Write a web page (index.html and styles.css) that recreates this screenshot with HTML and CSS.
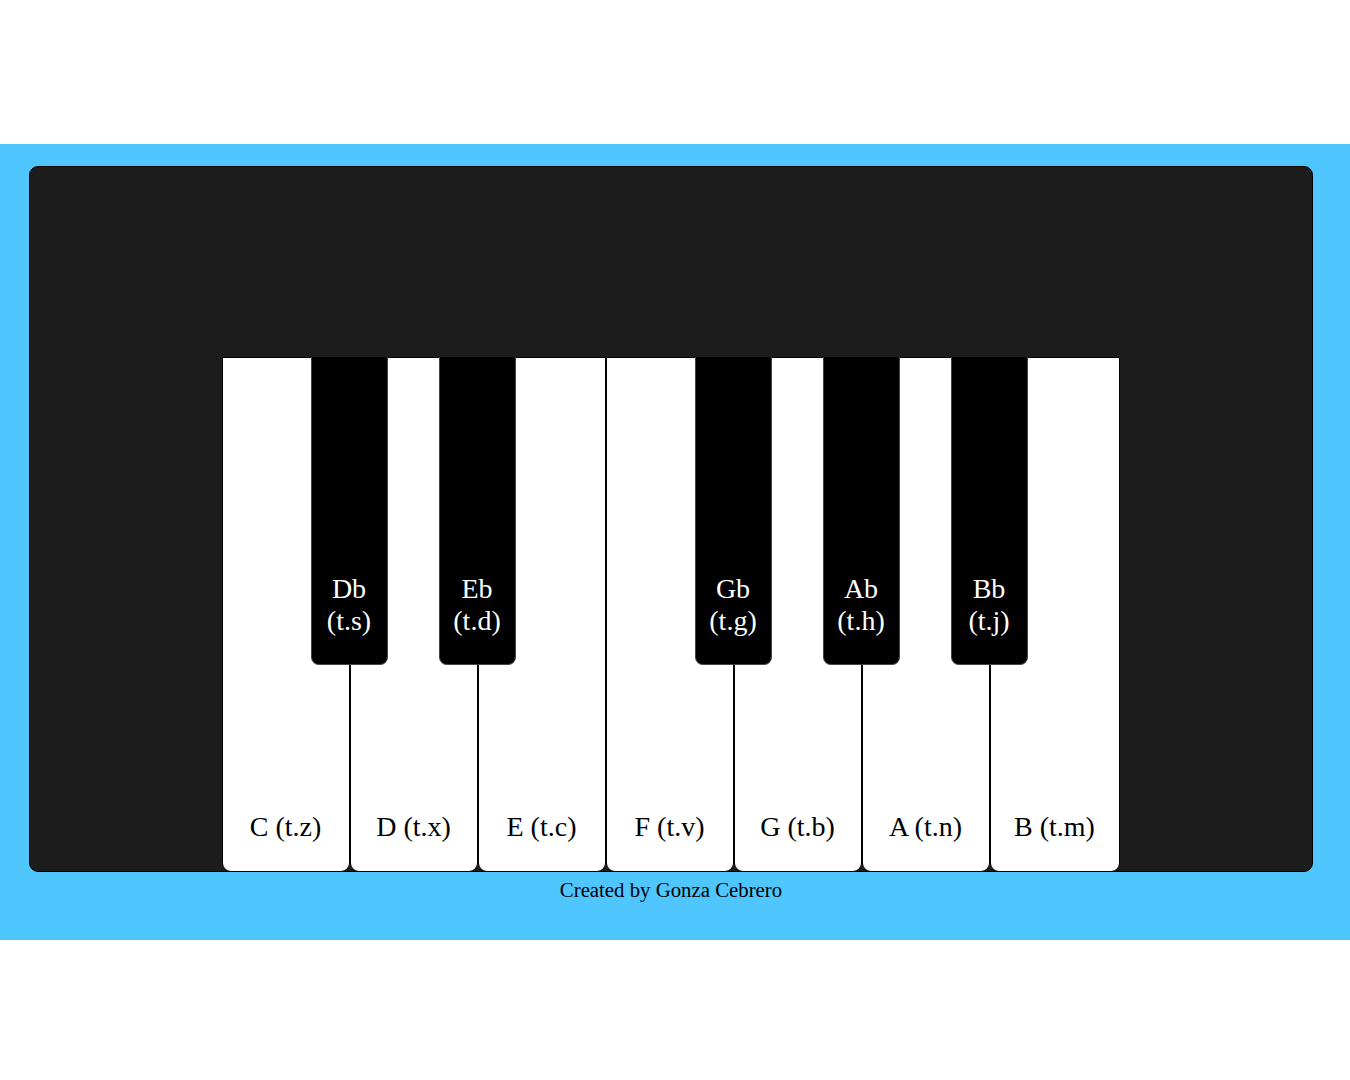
FILE: index.html
```html
<!DOCTYPE html>
<html lang="en">
<head>
  <meta charset="UTF-8">
  <meta name="viewport" content="width=device-width, initial-scale=1.0">
  <title>Piano</title>
  <link rel="stylesheet" href="styles.css">
</head>
<body>
  <!-- Piano section -->
  <section class="stage">
    <div class="piano">
      <div class="keys">
        <div class="key white">C (t.z)
          <div class="key black">Db<br>(t.s)</div>
        </div>
        <div class="key white">D (t.x)
          <div class="key black">Eb<br>(t.d)</div>
        </div>
        <div class="key white">E (t.c)</div>
        <div class="key white">F (t.v)
          <div class="key black">Gb<br>(t.g)</div>
        </div>
        <div class="key white">G (t.b)
          <div class="key black">Ab<br>(t.h)</div>
        </div>
        <div class="key white">A (t.n)
          <div class="key black">Bb<br>(t.j)</div>
        </div>
        <div class="key white">B (t.m)</div>
      </div>
    </div>

    <!-- Footer -->
    <footer>
      <p>Created by Gonza Cebrero</p>
    </footer>
  </section>
</body>
</html>
```

FILE: styles.css
```css
/* General Styles */
body {
  margin: 0;
  padding-top: 144px;
  font-family: 'Liberation Serif', 'Times New Roman', serif;
  background-color: white;
  color: black;
}

/* Blue stage */
.stage {
  background-color: #4fc7fe;
  padding: 22px 37px 38px 29px;
}

.piano {
  height: 704px;
  background-color: #1c1c1c;
  border: 1px solid black;
  border-radius: 9px;
  display: flex;
  flex-direction: column;
  justify-content: flex-end;
  align-items: center;
}

.keys {
  display: flex;
  margin-bottom: -1px;
  margin-right: 1px;
}

.key {
  box-sizing: border-box;
  display: flex;
  flex-direction: column;
  justify-content: flex-end;
  align-items: center;
  text-align: center;
  font-size: 28px;
  padding-bottom: 28px;
}

.key.white {
  position: relative;
  width: 128px;
  height: 515px;
  background-color: white;
  border: 1px solid black;
  border-radius: 0 0 9px 9px;
  color: black;
}

.key.white:last-child {
  width: 130px;
}

.key.black {
  position: absolute;
  top: -1px;
  right: -39px;
  z-index: 1;
  width: 77px;
  height: 308px;
  background-color: black;
  border: 1px solid #444;
  border-top: none;
  border-radius: 0 0 8px 8px;
  color: white;
  padding-bottom: 27px;
}

/* Footer */
footer {
  text-align: center;
  margin-top: 6px;
}

footer p {
  margin: 0;
  font-size: 20.8px;
}
```
